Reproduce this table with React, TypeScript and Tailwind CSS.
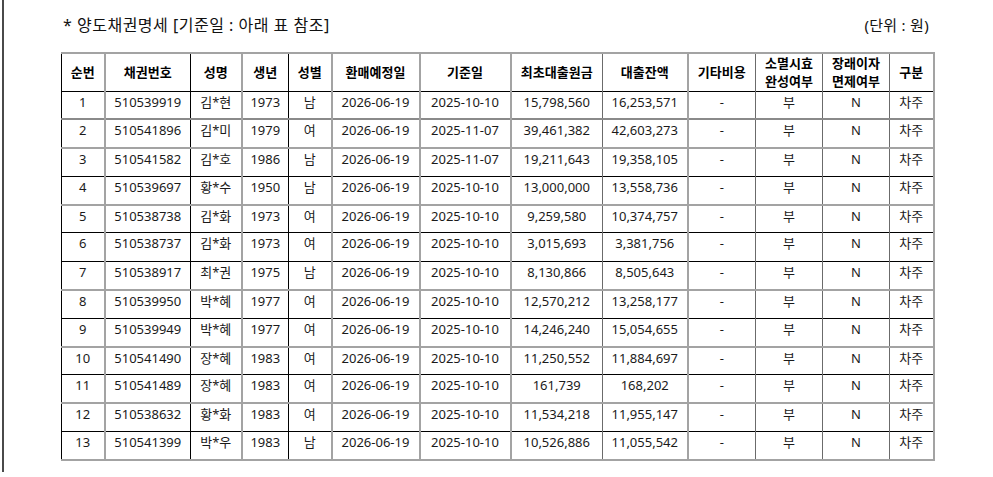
const rows = [
  ["1", "510539919", "김*현", "1973", "남", "2026-06-19", "2025-10-10", "15,798,560", "16,253,571"],
  ["2", "510541896", "김*미", "1979", "여", "2026-06-19", "2025-11-07", "39,461,382", "42,603,273"],
  ["3", "510541582", "김*호", "1986", "남", "2026-06-19", "2025-11-07", "19,211,643", "19,358,105"],
  ["4", "510539697", "황*수", "1950", "남", "2026-06-19", "2025-10-10", "13,000,000", "13,558,736"],
  ["5", "510538738", "김*화", "1973", "여", "2026-06-19", "2025-10-10", "9,259,580", "10,374,757"],
  ["6", "510538737", "김*화", "1973", "여", "2026-06-19", "2025-10-10", "3,015,693", "3,381,756"],
  ["7", "510538917", "최*권", "1975", "남", "2026-06-19", "2025-10-10", "8,130,866", "8,505,643"],
  ["8", "510539950", "박*혜", "1977", "여", "2026-06-19", "2025-10-10", "12,570,212", "13,258,177"],
  ["9", "510539949", "박*혜", "1977", "여", "2026-06-19", "2025-10-10", "14,246,240", "15,054,655"],
  ["10", "510541490", "장*혜", "1983", "여", "2026-06-19", "2025-10-10", "11,250,552", "11,884,697"],
  ["11", "510541489", "장*혜", "1983", "여", "2026-06-19", "2025-10-10", "161,739", "168,202"],
  ["12", "510538632", "황*화", "1983", "여", "2026-06-19", "2025-10-10", "11,534,218", "11,955,147"],
  ["13", "510541399", "박*우", "1983", "남", "2026-06-19", "2025-10-10", "10,526,886", "11,055,542"],
];

const headers = [
  ["순번"],
  ["채권번호"],
  ["성명"],
  ["생년"],
  ["성별"],
  ["환매예정일"],
  ["기준일"],
  ["최초대출원금"],
  ["대출잔액"],
  ["기타비용"],
  ["소멸시효", "완성여부"],
  ["장래이자", "면제여부"],
  ["구분"],
];

const colWidths = [
  "w-[43px]",
  "w-[86px]",
  "w-[51px]",
  "w-[47px]",
  "w-[43px]",
  "w-[88px]",
  "w-[91px]",
  "w-[92px]",
  "w-[85px]",
  "w-[68px]",
  "w-[67px]",
  "w-[67px]",
  "w-[44px]",
];

// left edge of each column
const colLeft = [
  "border-l border-l-black",
  "border-l-2 border-l-[#a3a3a3]",
  "border-l border-l-black",
  "border-l-2 border-l-[#a3a3a3]",
  "border-l border-l-black",
  "border-l-2 border-l-[#a3a3a3]",
  "border-l-2 border-l-[#a3a3a3]",
  "border-l-2 border-l-[#a3a3a3]",
  "border-l border-l-[#6b6b6b]",
  "border-l-2 border-l-[#a3a3a3]",
  "border-l border-l-[#6b6b6b]",
  "border-l border-l-[#6b6b6b]",
  "border-l border-l-[#6b6b6b] border-r-2 border-r-[#a3a3a3]",
];

// bottom edge of each body row
const rowBottom = [
  "border-b-2 border-b-[#8a8a8a]",
  "border-b-2 border-b-[#a3a3a3]",
  "border-b border-b-black",
  "border-b-2 border-b-[#a3a3a3]",
  "border-b border-b-black",
  "border-b border-b-black",
  "border-b-2 border-b-[#a3a3a3]",
  "border-b border-b-black",
  "border-b-2 border-b-[#a3a3a3]",
  "border-b border-b-black",
  "border-b-2 border-b-[#a3a3a3]",
  "border-b border-b-black",
  "border-b-2 border-b-[#a3a3a3]",
];

export default function App() {
  return (
    <div className="h-[477px] w-[993px] bg-white font-['Noto_Sans','Noto_Sans_CJK_KR',sans-serif] text-[#111]">
      <div className="ml-[2px] h-[472px] border-l-2 border-l-[#4a4a4a] pl-[57px] pr-[58px]">
        {/* Title */}
        <div className="flex items-center justify-between pt-[14px] pb-[16px] leading-[22px]">
          <span className="pl-[2px] text-[16px] tracking-[0.5px]">* 양도채권명세 [기준일 : 아래 표 참조]</span>
          <span className="pr-[6px] text-[15px] tracking-[0.3px]">(단위 : 원)</span>
        </div>

        <table className="w-[872px] table-fixed border-collapse text-center text-[13px]">
          <colgroup>
            {colWidths.map((w, i) => (
              <col key={i} className={w} />
            ))}
          </colgroup>
          <thead>
            <tr className="h-[38px] border-t-2 border-t-[#a3a3a3] border-b border-b-black">
              {headers.map((h, i) => (
                <th key={i} className={`${colLeft[i]} p-0 font-bold leading-[18px] text-black`}>
                  {h.map((line, j) => (
                    <div key={j}>{line}</div>
                  ))}
                </th>
              ))}
            </tr>
          </thead>
          <tbody>
            {rows.map((r, ri) => (
              <tr key={ri} className={`h-[28.4px] ${rowBottom[ri]}`}>
                {[...r, "-", "부", "N", "차주"].map((v, ci) => (
                  <td
                    key={ci}
                    className={`${colLeft[ci]} px-0 pt-[1px] pb-[7px] align-top leading-[18px] text-[#1a1a1a]`}
                  >
                    {v}
                  </td>
                ))}
              </tr>
            ))}
          </tbody>
        </table>
      </div>
    </div>
  );
}
